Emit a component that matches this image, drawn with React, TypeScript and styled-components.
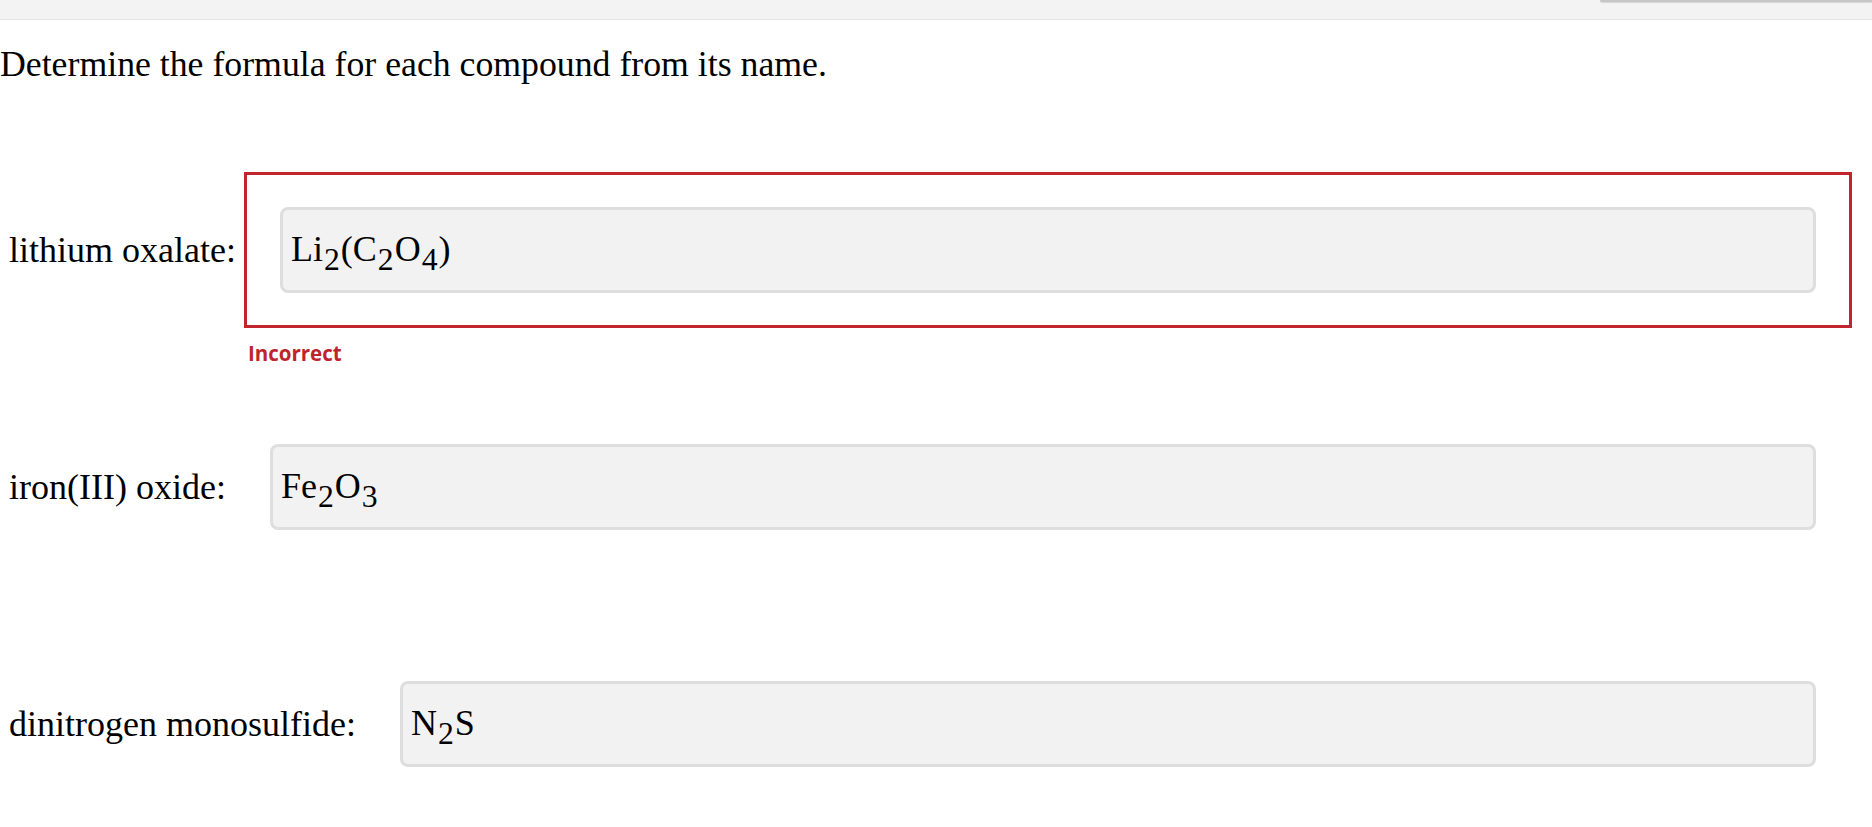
import React from 'react';
import styled, { createGlobalStyle } from 'styled-components';

const GlobalStyle = createGlobalStyle`
	html, body {
		margin: 0;
		padding: 0;
		background: #ffffff;
	}
	body {
		font-family: 'Liberation Serif', 'Times New Roman', serif;
		color: #000;
	}
`;

type Piece = { text: string; sub?: boolean };

interface Question {
	name: string;
	answer: Piece[];
	feedback?: string;
}

const questions: Question[] = [
	{
		name: 'lithium oxalate:',
		answer: [
			{ text: 'Li' },
			{ text: '2', sub: true },
			{ text: '(C' },
			{ text: '2', sub: true },
			{ text: 'O' },
			{ text: '4', sub: true },
			{ text: ')' },
		],
		feedback: 'Incorrect',
	},
	{
		name: 'iron(III) oxide:',
		answer: [{ text: 'Fe' }, { text: '2', sub: true }, { text: 'O' }, { text: '3', sub: true }],
	},
	{
		name: 'dinitrogen monosulfide:',
		answer: [{ text: 'N' }, { text: '2', sub: true }, { text: 'S' }],
	},
];

const TopBar = styled.div`
	display: flex;
	justify-content: flex-end;
	align-items: flex-start;
	height: 19px;
	background: #f3f3f3;
	border-bottom: 1px solid #e4e4e4;
`;

const TopBarTab = styled.div`
	width: 272px;
	height: 2px;
	background: #c6c6c6;
	border-bottom-left-radius: 2px;
	box-shadow: 0 1px 1px rgba(0, 0, 0, 0.12);
`;

const Page = styled.main`
	padding: 0 20px 0 0;
`;

const Prompt = styled.p`
	margin: 24px 0 88px 0;
	font-size: 35.75px;
	line-height: 40px;
	white-space: nowrap;
`;

const Label = styled.label`
	padding-left: 9px;
	font-size: 36px;
	line-height: 40px;
	white-space: nowrap;
`;

const AnswerWrap = styled.div<{ $error?: boolean }>`
	margin-left: 8px;
	padding: 32px 33px;
	border: 3px solid ${(p) => (p.$error ? '#c1262e' : 'transparent')};
`;

const FormulaField = styled.div`
	display: flex;
	align-items: center;
	height: 80px;
	padding: 0 8px;
	background: #f2f2f2;
	border: 3px solid #dedede;
	border-radius: 8px;
	font-family: 'Liberation Serif', 'Times New Roman', serif;
	font-size: 36px;
	line-height: 40px;
	white-space: nowrap;
`;

const Sub = styled.span`
	display: inline-block;
	transform: translateY(9px);
	font-size: 0.88em;
	margin: 0 1px;
`;

const Feedback = styled.div`
	grid-column: 2;
	box-sizing: border-box;
	height: 81px;
	padding: 11px 0 0 12px;
	font-family: 'Open Sans', 'Liberation Sans', sans-serif;
	font-weight: 700;
	font-size: 20.5px;
	line-height: 28px;
	color: #bd252d;
`;

const QuestionBlock = styled.section`
	display: grid;
	grid-template-columns: auto 1fr;
	align-items: center;

	&:last-child ${Feedback} {
		height: 24px;
	}
`;

function Formula({ pieces }: { pieces: Piece[] }) {
	return (
		<FormulaField>
			<span>
				{pieces.map((p, i) => (p.sub ? <Sub key={i}>{p.text}</Sub> : <span key={i}>{p.text}</span>))}
			</span>
		</FormulaField>
	);
}

export default function App() {
	return (
		<>
			<GlobalStyle />
			<TopBar>
				<TopBarTab />
			</TopBar>
			<Page>
				<Prompt>Determine the formula for each compound from its name.</Prompt>
				{questions.map((q) => (
					<QuestionBlock key={q.name}>
						<Label>{q.name}</Label>
						<AnswerWrap $error={!!q.feedback}>
							<Formula pieces={q.answer} />
						</AnswerWrap>
						<Feedback>{q.feedback}</Feedback>
					</QuestionBlock>
				))}
			</Page>
		</>
	);
}
